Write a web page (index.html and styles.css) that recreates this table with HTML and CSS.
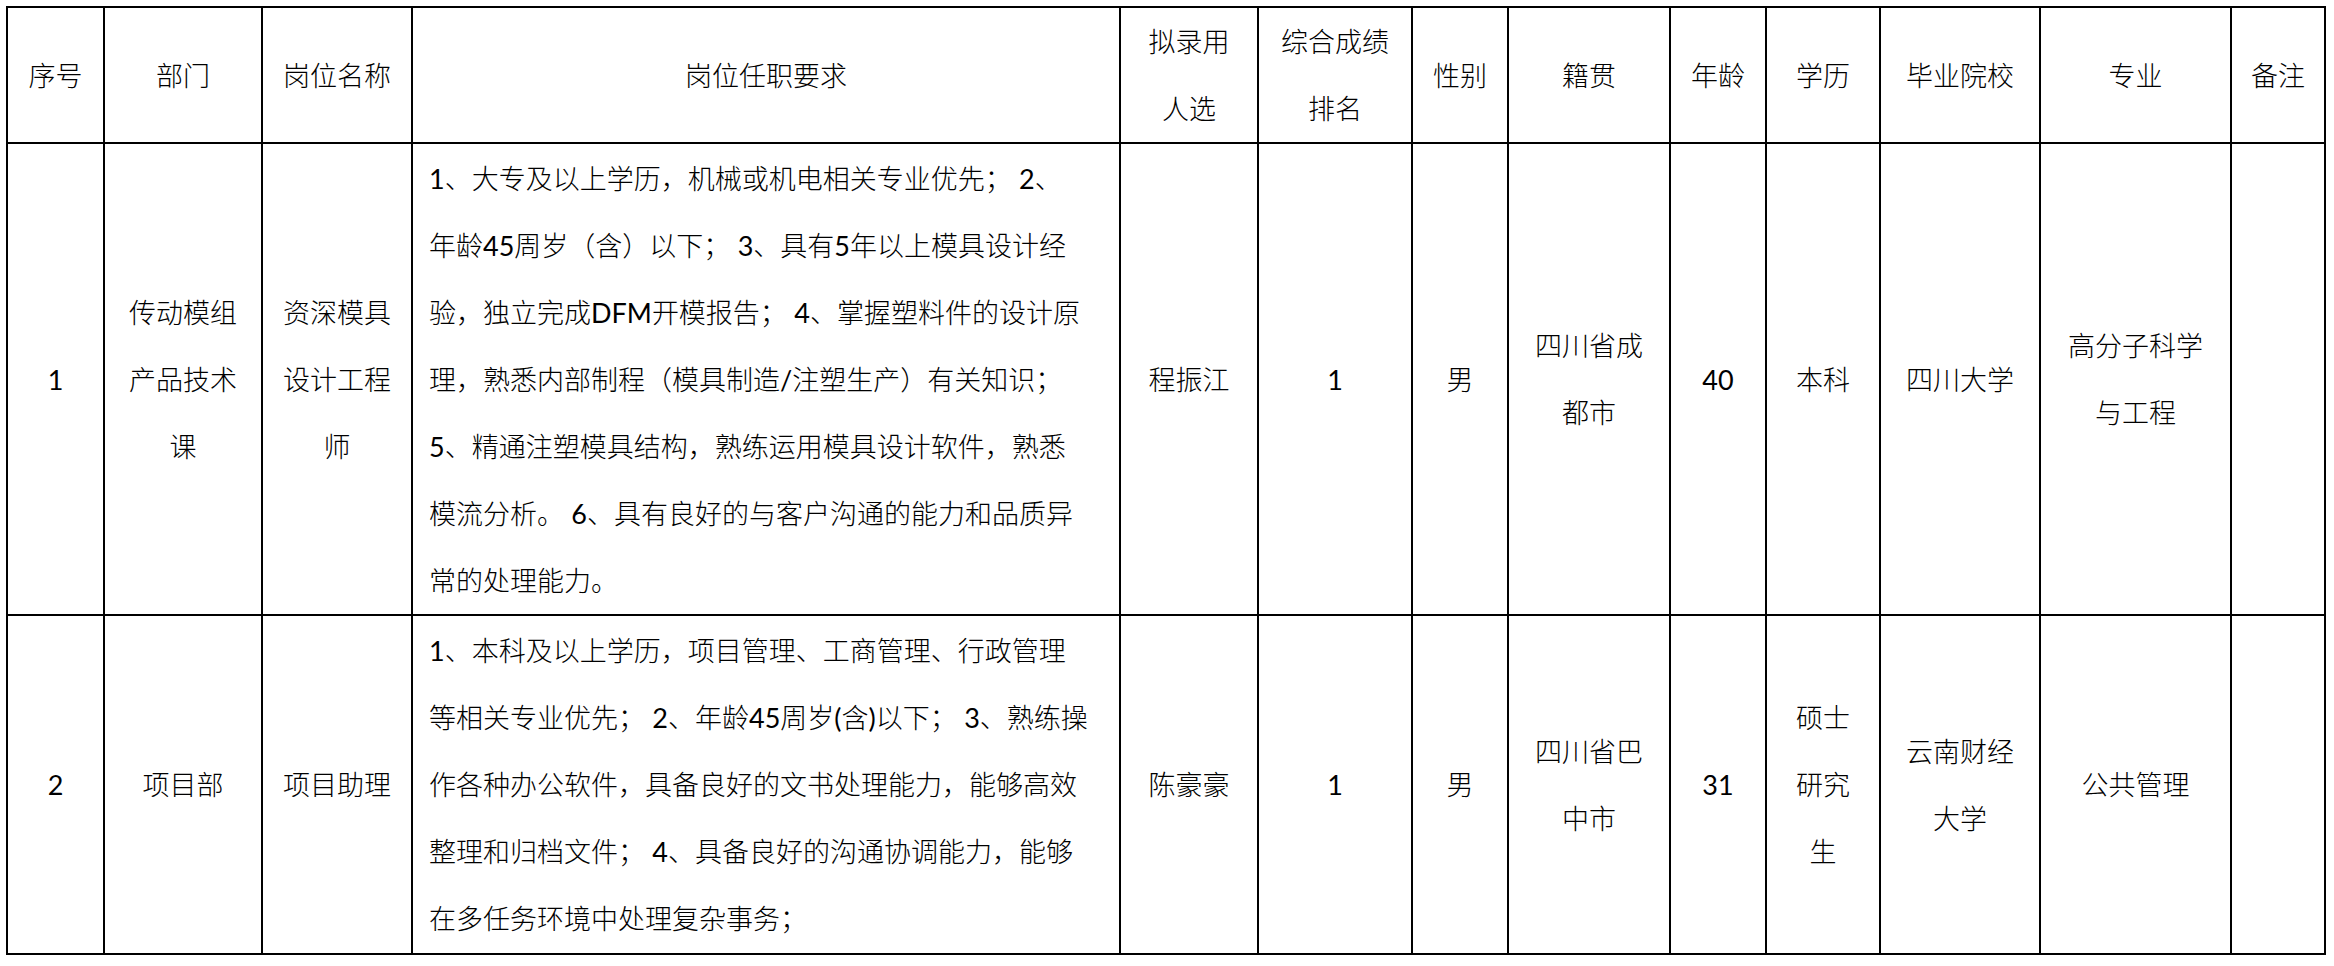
FILE: index.html
```html
<!DOCTYPE html>
<html lang="zh-CN">
<head>
<meta charset="utf-8">
<title>拟录用人员公示</title>
<link rel="stylesheet" href="styles.css">
</head>
<body>
<table class="sheet">
  <colgroup>
    <col class="c-no">
    <col class="c-dept">
    <col class="c-post">
    <col class="c-req">
    <col class="c-name">
    <col class="c-rank">
    <col class="c-sex">
    <col class="c-home">
    <col class="c-age">
    <col class="c-edu">
    <col class="c-school">
    <col class="c-major">
    <col class="c-note">
  </colgroup>
  <thead>
    <tr class="head">
      <th>序号</th>
      <th>部门</th>
      <th>岗位名称</th>
      <th>岗位任职要求</th>
      <th>拟录用<br>人选</th>
      <th>综合成绩<br>排名</th>
      <th>性别</th>
      <th>籍贯</th>
      <th>年龄</th>
      <th>学历</th>
      <th>毕业院校</th>
      <th>专业</th>
      <th>备注</th>
    </tr>
  </thead>
  <tbody>
    <tr class="row-one">
      <td class="num">1</td>
      <td>传动模组<br>产品技术<br>课</td>
      <td>资深模具<br>设计工程<br>师</td>
      <td class="req"><span class="num">1</span>、大专及以上学历，机械或机电相关专业优先； <span class="num">2</span>、<br>年龄<span class="num">45</span>周岁（含）以下； <span class="num">3</span>、具有<span class="num">5</span>年以上模具设计经<br>验，独立完成<span class="num">DFM</span>开模报告； <span class="num">4</span>、掌握塑料件的设计原<br>理，熟悉内部制程（模具制造<span class="num">/</span>注塑生产）有关知识；<br><span class="num">5</span>、精通注塑模具结构，熟练运用模具设计软件，熟悉<br>模流分析。 <span class="num">6</span>、具有良好的与客户沟通的能力和品质异<br>常的处理能力。</td>
      <td>程振江</td>
      <td class="num">1</td>
      <td>男</td>
      <td>四川省成<br>都市</td>
      <td class="num">40</td>
      <td>本科</td>
      <td>四川大学</td>
      <td>高分子科学<br>与工程</td>
      <td></td>
    </tr>
    <tr class="row-two">
      <td class="num">2</td>
      <td>项目部</td>
      <td>项目助理</td>
      <td class="req"><span class="num">1</span>、本科及以上学历，项目管理、工商管理、行政管理<br>等相关专业优先； <span class="num">2</span>、年龄<span class="num">45</span>周岁<span class="num">(</span>含<span class="num">)</span>以下； <span class="num">3</span>、熟练操<br>作各种办公软件，具备良好的文书处理能力，能够高效<br>整理和归档文件； <span class="num">4</span>、具备良好的沟通协调能力，能够<br>在多任务环境中处理复杂事务；</td>
      <td>陈豪豪</td>
      <td class="num">1</td>
      <td>男</td>
      <td>四川省巴<br>中市</td>
      <td class="num">31</td>
      <td>硕士<br>研究<br>生</td>
      <td>云南财经<br>大学</td>
      <td>公共管理</td>
      <td></td>
    </tr>
  </tbody>
</table>
</body>
</html>
```

FILE: styles.css
```css
html, body {
  margin: 0;
  padding: 0;
  background: #ffffff;
}

body {
  padding: 6px 0 0 6px;
  font-family: "Lato", "Noto Sans CJK SC", sans-serif;
  color: #000000;
}

.sheet {
  border-collapse: collapse;
  table-layout: fixed;
  width: 2320px;
  font-size: 27px;
  line-height: 67px;
}

.sheet th,
.sheet td {
  border: 2px solid #000000;
  padding: 0 4px;
  text-align: center;
  vertical-align: middle;
  font-weight: 300;
  white-space: nowrap;
  overflow: hidden;
}

.sheet th {
  font-weight: 300;
  color: #000000;
}

.sheet .num {
  font-weight: 400;
}

.sheet td.req {
  text-align: left;
  padding: 0 10px 0 16px;
}

.head { height: 136px; }
.row-one { height: 472px; }
.row-two { height: 339px; }

.c-no { width: 97px; }
.c-dept { width: 158px; }
.c-post { width: 150px; }
.c-req { width: 708px; }
.c-name { width: 138px; }
.c-rank { width: 154px; }
.c-sex { width: 96px; }
.c-home { width: 162px; }
.c-age { width: 96px; }
.c-edu { width: 114px; }
.c-school { width: 160px; }
.c-major { width: 191px; }
.c-note { width: 94px; }
```
